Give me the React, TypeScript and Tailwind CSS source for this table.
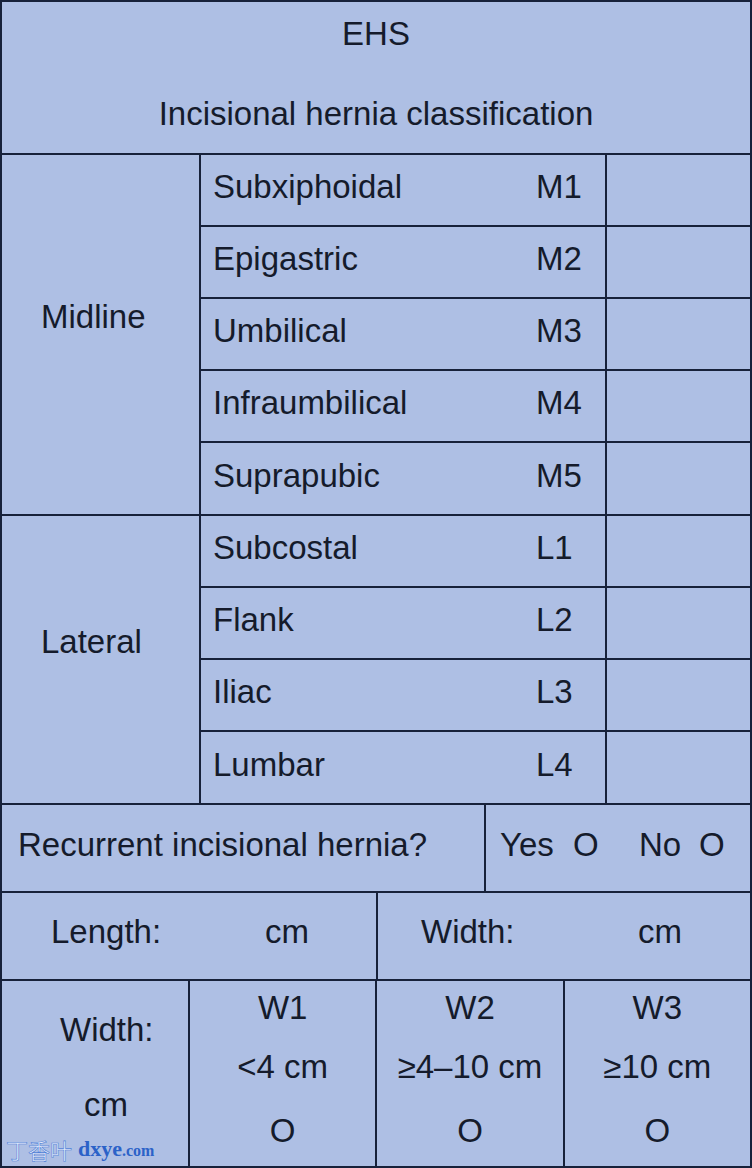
import React from 'react';

const midline = [
  { name: 'Subxiphoidal', code: 'M1' },
  { name: 'Epigastric', code: 'M2' },
  { name: 'Umbilical', code: 'M3' },
  { name: 'Infraumbilical', code: 'M4' },
  { name: 'Suprapubic', code: 'M5' },
];

const lateral = [
  { name: 'Subcostal', code: 'L1' },
  { name: 'Flank', code: 'L2' },
  { name: 'Iliac', code: 'L3' },
  { name: 'Lumbar', code: 'L4' },
];

const widths = [
  { label: 'W1', range: '<4 cm' },
  { label: 'W2', range: '≥4–10 cm' },
  { label: 'W3', range: '≥10 cm' },
];

type Item = { name: string; code: string };

const Section: React.FC<{ title: string; items: Item[] }> = ({ title, items }) => (
  <div className="flex border-b-2 border-[#17213a]">
    <div className="w-[199px] shrink-0 border-r-2 border-[#17213a] flex items-center pl-[39px] pb-[36px]">
      {title}
    </div>
    <div className="flex-1 flex flex-col">
      {items.map((item, i) => (
        <div
          key={item.code}
          className={`flex ${i < items.length - 1 ? 'h-[72px] border-b-2 border-[#17213a]' : 'h-[71px]'}`}
        >
          <div className="w-[406px] shrink-0 border-r-2 border-[#17213a] flex items-center pl-[12px] pb-[6px]">
            <span className="w-[323px]">{item.name}</span>
            <span>{item.code}</span>
          </div>
          <div className="flex-1" />
        </div>
      ))}
    </div>
  </div>
);

const App: React.FC = () => {
  return (
    <div className="w-[752px] h-[1168px] bg-[#aebfe4] text-[#151b2b] text-[33px] leading-[38px] border-2 border-[#17213a] flex flex-col font-['Liberation_Sans',Arial,sans-serif]">
      {/* Title */}
      <div className="h-[153px] shrink-0 border-b-2 border-[#17213a] flex flex-col items-center pt-[13px] gap-[42px]">
        <div>EHS</div>
        <div>Incisional hernia classification</div>
      </div>

      <Section title="Midline" items={midline} />
      <Section title="Lateral" items={lateral} />

      {/* Recurrent */}
      <div className="h-[88px] shrink-0 flex border-b-2 border-[#17213a]">
        <div className="w-[484px] shrink-0 border-r-2 border-[#17213a] flex items-center pl-[16px] pb-[6px]">
          Recurrent incisional hernia?
        </div>
        <div className="flex-1 flex items-center pl-[14px] pb-[6px]">
          <span className="w-[73px]">Yes</span>
          <span className="w-[66px]">O</span>
          <span className="w-[60px]">No</span>
          <span>O</span>
        </div>
      </div>

      {/* Length / Width */}
      <div className="h-[88px] shrink-0 flex border-b-2 border-[#17213a]">
        <div className="w-[376px] shrink-0 border-r-2 border-[#17213a] flex items-center pl-[49px] pb-[8px]">
          <span className="w-[214px]">Length:</span>
          <span>cm</span>
        </div>
        <div className="flex-1 flex items-center pl-[43px] pb-[8px]">
          <span className="w-[217px]">Width:</span>
          <span>cm</span>
        </div>
      </div>

      {/* Width classes */}
      <div className="flex-1 flex">
        <div className="relative w-[188px] shrink-0 border-r-2 border-[#17213a] flex flex-col pt-[30px]">
          <div className="pl-[58px]">Width:</div>
          <div className="pl-[82px] mt-[37px]">cm</div>
          <div className="absolute left-[4px] bottom-[6px] flex items-end gap-[6px] leading-none">
            <span className="text-[22px] text-[#e4ecfb] font-['Noto_Sans_CJK_SC',sans-serif] [-webkit-text-stroke:0.6px_#4f7fd6]">
              丁香叶
            </span>
            <span className="font-['Liberation_Serif',serif] font-bold text-[#2b62c8] text-[22px]">
              dxye<span className="text-[16px]">.com</span>
            </span>
          </div>
        </div>
        {widths.map((w, i) => (
          <div
            key={w.label}
            className={`flex-1 flex flex-col items-center pt-[8px] ${i < widths.length - 1 ? 'border-r-2 border-[#17213a]' : ''}`}
          >
            <div>{w.label}</div>
            <div className="mt-[21px]">{w.range}</div>
            <div className="mt-[26px]">O</div>
          </div>
        ))}
      </div>
    </div>
  );
};

export default App;
